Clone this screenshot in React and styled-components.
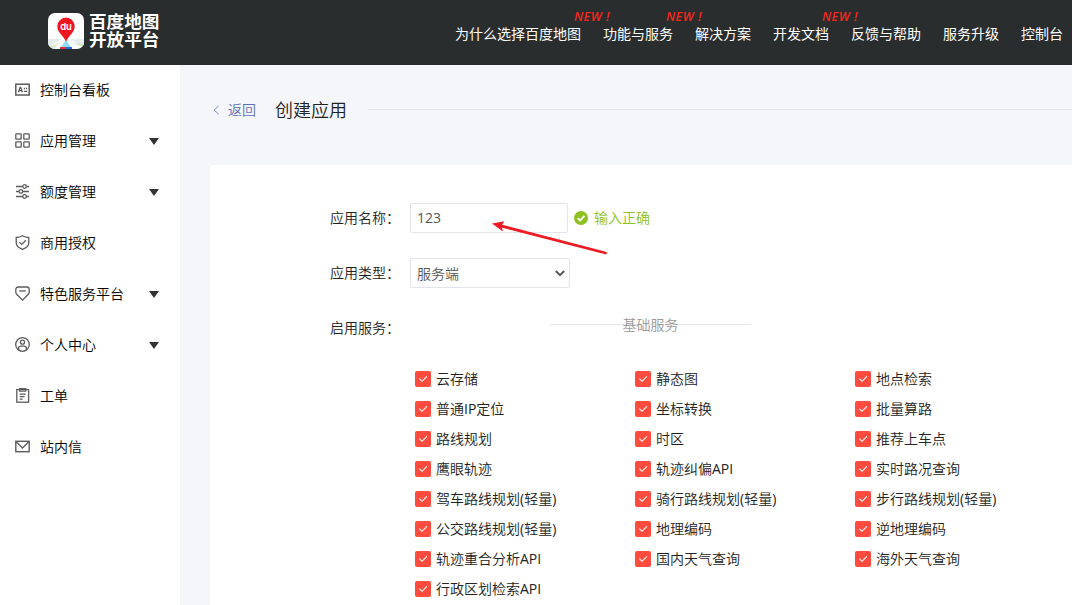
import React, { useState } from "react";
import styled, { createGlobalStyle } from "styled-components";

const navItems = [
    { label: "为什么选择百度地图", isNew: true },
    { label: "功能与服务", isNew: true },
    { label: "解决方案" },
    { label: "开发文档", isNew: true },
    { label: "反馈与帮助" },
    { label: "服务升级" },
    { label: "控制台" },
];

const menuItems = [
    { label: "控制台看板", icon: "board" },
    { label: "应用管理", icon: "grid", expandable: true },
    { label: "额度管理", icon: "sliders", expandable: true },
    { label: "商用授权", icon: "shield" },
    { label: "特色服务平台", icon: "gem", expandable: true },
    { label: "个人中心", icon: "user", expandable: true },
    { label: "工单", icon: "clipboard" },
    { label: "站内信", icon: "mail" },
];

const services = [
    "云存储", "静态图", "地点检索",
    "普通IP定位", "坐标转换", "批量算路",
    "路线规划", "时区", "推荐上车点",
    "鹰眼轨迹", "轨迹纠偏API", "实时路况查询",
    "驾车路线规划(轻量)", "骑行路线规划(轻量)", "步行路线规划(轻量)",
    "公交路线规划(轻量)", "地理编码", "逆地理编码",
    "轨迹重合分析API", "国内天气查询", "海外天气查询",
    "行政区划检索API",
];

const iconShapes = {
    board: (
        <>
            <rect x="0.8" y="2.2" width="13.4" height="10.8" strokeWidth="1.5" />
            <path d="M3.4 10.2L5.1 5.3H5.7L7.4 10.2M4 8.6H6.8M8.8 6.5H10.2M11 6.5H12.2M8.8 9.3H12.2" />
        </>
    ),
    grid: (
        <>
            <rect x="0.8" y="0.8" width="5.4" height="5.4" rx="0.6" />
            <rect x="8.8" y="0.8" width="5.4" height="5.4" rx="0.6" />
            <rect x="0.8" y="8.8" width="5.4" height="5.4" rx="0.6" />
            <rect x="8.8" y="8.8" width="5.4" height="5.4" rx="0.6" />
        </>
    ),
    sliders: (
        <>
            <path d="M1 2.5H7.7M11.5 2.5H14M1 7.5H4M7.8 7.5H14M1 12.5H7.7M11.5 12.5H14" />
            <circle cx="9.6" cy="2.5" r="1.8" />
            <circle cx="5.9" cy="7.5" r="1.8" />
            <circle cx="9.6" cy="12.5" r="1.8" />
        </>
    ),
    shield: (
        <>
            <path d="M7.5 0.7C9.4 2 11.5 2.4 13.8 2.5V7.5C13.8 10.7 10.8 13.2 7.5 14.4C4.2 13.2 1.2 10.7 1.2 7.5V2.5C3.5 2.4 5.6 2 7.5 0.7Z" />
            <path d="M4.4 7.2L6.8 9.4L10.8 5.3" />
        </>
    ),
    gem: (
        <>
            <path d="M3.2 1H11.8C13.2 1 14.2 2 14.2 3.4V6.2C14.2 7 13.9 7.6 13.3 8.2L7.5 14.1L1.7 8.2C1.1 7.6 0.8 7 0.8 6.2V3.4C0.8 2 1.8 1 3.2 1Z" />
            <path d="M4.2 5H10.8" />
        </>
    ),
    user: (
        <>
            <circle cx="7.5" cy="7.5" r="6.8" />
            <circle cx="7.5" cy="5.2" r="2" />
            <path d="M3.6 12.8V11.3Q3.6 9.2 5.7 9.2H9.3Q11.4 9.2 11.4 11.3V12.8" />
        </>
    ),
    clipboard: (
        <>
            <rect x="1.8" y="1.6" width="11.8" height="12.6" />
            <path d="M4.7 0.7H10.7V3.2H4.7ZM4.7 6.2H10.7M4.7 8.7H9.5M4.7 11.2H7.7" />
        </>
    ),
    mail: (
        <>
            <rect x="0.8" y="2.3" width="13.4" height="10.4" strokeWidth="1.4" />
            <path d="M1.2 2.8L7.5 9L13.8 2.8" />
        </>
    ),
};

const LogoMark = () => (
    <svg width="36" height="36" viewBox="0 0 36 36">
        <defs>
            <clipPath id="mark">
                <rect width="36" height="36" rx="7" />
            </clipPath>
        </defs>
        <g clipPath="url(#mark)">
            <rect width="36" height="36" fill="#fff" />
            <path d="M0 26H14L0 34Z" fill="#e3eaec" />
            <path d="M22 26H36V34Z" fill="#e8edef" />
            <path d="M0 36V34L10 30L7 36Z" fill="#dbe9cf" />
            <path d="M24 30L36 31V34Z" fill="#cfe5c1" />
            <path d="M18 27L23 34H13Z" fill="#8fdcf5" />
            <rect x="12" y="34" width="6" height="2" fill="#e32d32" />
            <rect x="18" y="34" width="6" height="2" fill="#2868d8" />
            <path d="M18 29C16 23 9.3 20 9.3 13.3A8.7 8.7 0 0 1 26.700 13.3C26.7 20 20 23 18 29Z" fill="#f0161f" />
        </g>
        <text x="18" y="17.3" textAnchor="middle" fill="#fff" fontSize="9.5" fontWeight="600" fontFamily="Inter, sans-serif">du</text>
    </svg>
);

export default function App() {
    const [name, setName] = useState("123");
    const [checked, setChecked] = useState(services);

    const toggle = (service) => {
        if (checked.includes(service)) {
            setChecked(checked.filter((s) => s !== service));
        } else {
            setChecked([...checked, service]);
        }
    };

    return (
        <Page>
            <GlobalStyle />
            <Header>
                <Logo>
                    <LogoMark />
                    <LogoText>
                        <span>百度地图</span>
                        <span>开放平台</span>
                    </LogoText>
                </Logo>
                <Nav>
                    {navItems.map((item) => (
                        <NavItem key={item.label}>
                            {item.label}
                            {item.isNew && <NewBadge>NEW !</NewBadge>}
                        </NavItem>
                    ))}
                </Nav>
            </Header>
            <Body>
                <Sidebar>
                    {menuItems.map((item) => (
                        <MenuItem key={item.label}>
                            <MenuIcon viewBox="0 0 15 15">{iconShapes[item.icon]}</MenuIcon>
                            <span>{item.label}</span>
                            {item.expandable && <Caret />}
                        </MenuItem>
                    ))}
                </Sidebar>
                <Main>
                    <TitleBar>
                        <Back>
                            <svg width="7" height="10" viewBox="0 0 7 10" fill="none" stroke="#7b8bc9">
                                <path d="M5.7 0.8L1.2 5L5.7 9.2" />
                            </svg>
                            <span>返回</span>
                        </Back>
                        <h1>创建应用</h1>
                        <Rule />
                    </TitleBar>
                    <Card>
                        <Field>
                            <Label>应用名称：</Label>
                            <NameInput value={name} onChange={(e) => setName(e.target.value)} />
                            <Valid>
                                <svg width="14" height="14" viewBox="0 0 14 14">
                                    <circle cx="7" cy="7" r="7" fill="#8cc11f" />
                                    <path d="M3.6 7.1L6.1 9.5L10.5 4.9" fill="none" stroke="#fff" strokeWidth="1.9" />
                                </svg>
                                <span>输入正确</span>
                            </Valid>
                            <Arrow viewBox="0 0 116 36">
                                <path d="M10 5.200L113.500 32" stroke="#ed1c24" strokeWidth="2.8" strokeLinecap="round" />
                                <path d="M0 2.500L12.200 0.300L9.500 5L11 10.600Z" fill="#ed1c24" />
                            </Arrow>
                        </Field>
                        <Field>
                            <Label>应用类型：</Label>
                            <TypeSelect>
                                服务端
                                <svg width="10" height="7" viewBox="0 0 10 7" fill="none" stroke="#555" strokeWidth="1.9">
                                    <path d="M0.8 1L5 5.200L9.200 1" />
                                </svg>
                            </TypeSelect>
                        </Field>
                        <Field>
                            <Label>启用服务：</Label>
                            <GroupTitle>基础服务</GroupTitle>
                        </Field>
                        <ServiceGrid>
                            {services.map((service) => (
                                <Service key={service} onClick={() => toggle(service)}>
                                    <Box $on={checked.includes(service)}>
                                        <svg width="16" height="16" viewBox="0 0 16 16" fill="none" stroke="#fff" strokeWidth="1.1">
                                            <path d="M4.300 7.700L7 10.300L11.900 5.400" />
                                        </svg>
                                    </Box>
                                    <span>{service}</span>
                                </Service>
                            ))}
                        </ServiceGrid>
                    </Card>
                </Main>
            </Body>
        </Page>
    );
}

const GlobalStyle = createGlobalStyle`
    * {
        box-sizing: border-box;
    }
    body {
        margin: 0;
        overflow: hidden;
        font-family: "Open Sans", "Noto Sans CJK SC DemiLight", "Noto Sans CJK SC", sans-serif;
        font-size: 14px;
        font-weight: 400;
        color: #222;
    }
    svg {
        display: block;
        flex: none;
    }
`;

const Page = styled.div`
    display: flex;
    flex-direction: column;
    height: 605px;
    overflow: hidden;
`;

const Header = styled.header`
    display: flex;
    justify-content: space-between;
    flex: none;
    height: 65px;
    padding: 0 9px 0 48px;
    background: #292d2e;
    color: #fff;
    font-family: "Open Sans", "Noto Sans CJK SC", sans-serif;
`;

const Logo = styled.div`
    display: flex;
    gap: 5px;
    padding-top: 13px;
`;

const LogoText = styled.div`
    display: flex;
    flex-direction: column;
    margin-top: -1px;
    font-size: 17.6px;
    font-weight: 700;
    line-height: 18px;
    white-space: nowrap;
`;

const Nav = styled.nav`
    display: flex;
    gap: 22px;
    padding-top: 24px;
    line-height: 20px;
`;

const NavItem = styled.a`
    position: relative;
    white-space: nowrap;
`;

const NewBadge = styled.span`
    position: absolute;
    top: -15px;
    left: calc(100% - 7px);
    color: #f5261b;
    font-size: 12.5px;
    font-style: italic;
    font-weight: 600;
    letter-spacing: 0.5px;
    line-height: 16px;
`;

const Body = styled.div`
    display: flex;
    flex: 1;
    min-height: 0;
`;

const Sidebar = styled.aside`
    flex: none;
    width: 180px;
    background: #fff;
    color: #000;
    font-weight: 350;
`;

const MenuItem = styled.div`
    display: flex;
    align-items: center;
    height: 51px;
    padding: 0 21px 0 15px;
    gap: 10px;
    span {
        padding-bottom: 3px;
    }
`;

const MenuIcon = styled.svg`
    width: 15px;
    height: 15px;
    margin-bottom: 2px;
    fill: none;
    stroke: #5c5c5c;
    stroke-width: 1.3;
`;

const Caret = styled.i`
    margin-left: auto;
    border: 5px solid transparent;
    border-top: 7px solid #333;
    border-bottom: 0;
`;

const Main = styled.main`
    display: flex;
    flex-direction: column;
    flex: 1;
    min-width: 0;
    padding-left: 30px;
    background: #f5f6fa;
    font-weight: 350;
`;

const TitleBar = styled.div`
    display: flex;
    align-items: center;
    flex: none;
    height: 100px;
    padding: 0 0 10px 3px;
    h1 {
        margin: 0 21px 0 19px;
        font-size: 18px;
        font-weight: 350;
        line-height: 24px;
    }
`;

const Back = styled.a`
    display: flex;
    align-items: center;
    gap: 8px;
    color: #5d70bd;
    span {
        padding-bottom: 2px;
    }
`;

const Rule = styled.div`
    flex: 1;
    height: 1px;
    margin-bottom: 2px;
    background: #e5e7eb;
`;

const Card = styled.section`
    flex: 1;
    padding: 38px 0 0 120px;
    border-top-left-radius: 3px;
    background: #fff;
`;

const Field = styled.div`
    position: relative;
    display: flex;
    align-items: center;
    height: 30px;
    margin-bottom: 25px;
`;

const Label = styled.label`
    width: 80px;
    padding-bottom: 2px;
`;

const NameInput = styled.input`
    width: 158px;
    height: 30px;
    padding: 0 6px 2px;
    border: 1px solid #e1e4ea;
    border-radius: 2px;
    outline: none;
    color: #555;
    font: inherit;
    font-weight: 400;
`;

const Valid = styled.span`
    display: flex;
    align-items: center;
    gap: 6px;
    margin-left: 6px;
    color: #8cc11f;
    span {
        padding-bottom: 3px;
    }
`;

const Arrow = styled.svg`
    position: absolute;
    top: 18px;
    left: 162px;
    width: 116px;
    height: 36px;
    pointer-events: none;
`;

const TypeSelect = styled.div`
    display: flex;
    align-items: center;
    justify-content: space-between;
    width: 160px;
    height: 30px;
    padding: 0 4px 0 6px;
    border: 1px solid #e1e4ea;
    border-radius: 2px;
    color: #555;
`;

const GroupTitle = styled.div`
    width: 201px;
    margin: -6px 0 0 140px;
    color: #999;
    text-align: center;
    line-height: 20px;
    background: linear-gradient(#e5e5e5, #e5e5e5) 0 9px / 100% 1px no-repeat;
`;

const ServiceGrid = styled.div`
    display: grid;
    grid-template-columns: repeat(3, 220px);
    grid-auto-rows: 30px;
    margin: -4px 0 0 85px;
`;

const Service = styled.div`
    display: flex;
    align-items: center;
    gap: 5px;
    font-weight: 400;
    white-space: nowrap;
    cursor: pointer;
    > span:last-child {
        padding-bottom: 2px;
    }
`;

const Box = styled.span`
    width: 16px;
    height: 16px;
    border-radius: 2px;
    background: ${(props) => (props.$on ? "#ff4c3f" : "#ddd")};
`;
